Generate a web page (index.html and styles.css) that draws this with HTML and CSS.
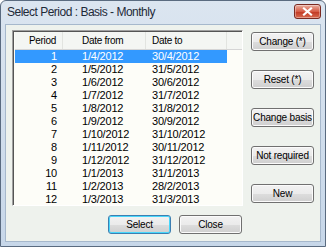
FILE: index.html
```html
<!DOCTYPE html>
<html lang="en">
<head>
    <meta charset="UTF-8">
    <title>Select Period</title>
    <link rel="stylesheet" href="styles.css">
</head>
<body>

    <div class="window">
        <div class="title-bar">
            <span class="title">Select Period : Basis - Monthly</span>
            <div class="close-btn">
                <svg width="13" height="9" viewBox="0 0 13 9">
                    <path d="M3 1.5 L10 7.5 M10 1.5 L3 7.5" stroke="#fff" stroke-width="2.2" stroke-linecap="square"/>
                </svg>
            </div>
        </div>

        <div class="client">
            <div class="top-row">
                <!-- period list -->
                <div class="list">
                    <div class="list-header">
                        <div class="col c1">Period</div>
                        <div class="col c2">Date from</div>
                        <div class="col c3">Date to</div>
                        <div class="col c4"></div>
                    </div>
                    <div class="list-body" id="rows"></div>
                </div>

                <div class="side-buttons">
                    <button class="btn">Change (*)</button>
                    <button class="btn">Reset (*)</button>
                    <button class="btn">Change basis</button>
                    <button class="btn">Not required</button>
                    <button class="btn">New</button>
                </div>
            </div>

            <div class="bottom-row">
                <button class="btn default">Select</button>
                <button class="btn">Close</button>
            </div>
        </div>
    </div>

    <script>
        var periods = [
            ["1", "1/4/2012", "30/4/2012"],
            ["2", "1/5/2012", "31/5/2012"],
            ["3", "1/6/2012", "30/6/2012"],
            ["4", "1/7/2012", "31/7/2012"],
            ["5", "1/8/2012", "31/8/2012"],
            ["6", "1/9/2012", "30/9/2012"],
            ["7", "1/10/2012", "31/10/2012"],
            ["8", "1/11/2012", "30/11/2012"],
            ["9", "1/12/2012", "31/12/2012"],
            ["10", "1/1/2013", "31/1/2013"],
            ["11", "1/2/2013", "28/2/2013"],
            ["12", "1/3/2013", "31/3/2013"]
        ];

        var body = document.getElementById("rows");
        for (var i = 0; i < periods.length; i++) {
            var row = document.createElement("div");
            row.className = i === 0 ? "row selected" : "row";
            row.innerHTML = '<div class="col c1">' + periods[i][0] + '</div>' +
                            '<div class="col c2">' + periods[i][1] + '</div>' +
                            '<div class="col c3">' + periods[i][2] + '</div>';
            body.appendChild(row);
        }
    </script>

</body>
</html>
```

FILE: styles.css
```css
* {
    margin: 0;
    padding: 0;
    box-sizing: border-box;
}

body {
    font-family: 'Liberation Sans', Arial, sans-serif;
    font-size: 11px;
    color: #000;
    background-color: #fff;
}

.window {
    width: 326px;
    height: 247px;
    display: flex;
    flex-direction: column;
    background: linear-gradient(#dbe5f0, #c7d7e9);
    border: 1px solid #5a6b80;
    border-radius: 6px 6px 0 0;
    padding: 0 4px 4px 4px;
}

.title-bar {
    height: 23px;
    display: flex;
    align-items: flex-start;
    justify-content: space-between;
    padding-left: 2px;
}

.title {
    font-size: 12px;
    letter-spacing: -0.5px;
    color: #1e2a38;
    margin-top: 4px;
}

.close-btn {
    width: 27px;
    height: 15px;
    margin-top: 3px;
    margin-right: 0;
    border: 1px solid #7a2a22;
    border-radius: 3px;
    background: linear-gradient(#eab0a2, #d65c46 50%, #c23b26 55%, #d86a4f);
    box-shadow: inset 0 0 0 1px rgba(255, 255, 255, 0.35);
    display: flex;
    align-items: center;
    justify-content: center;
}

.client {
    flex: 1;
    background-color: #eef2ed;
    border: 1px solid #a6b8cc;
    padding: 5px 6px;
}

.top-row {
    display: flex;
}

.list {
    width: 231px;
    height: 176px;
    background-color: #fdfdf8;
    border-top: 1px solid #a0a0a0;
    border-left: 1px solid #a0a0a0;
    border-right: 1px solid #fff;
    border-bottom: 1px solid #fff;
    box-shadow: inset 1px 1px 0 #555;
    padding: 1px 0 0 2px;
}

.list-header {
    display: flex;
    height: 18px;
    align-items: center;
    font-size: 10px;
    letter-spacing: -0.3px;
    background-color: #f4f6f3;
    border-bottom: 1px solid #d5d5d5;
}

.list-header .col {
    height: 100%;
    display: flex;
    align-items: center;
    border-right: 1px solid #e2e4e0;
}

.list-header .c1 {
    justify-content: flex-end;
}

.list-header .c4 {
    flex: 1;
    border-right: none;
}

.row {
    display: flex;
    width: 212px;
    height: 13px;
    line-height: 13px;
    letter-spacing: -0.2px;
}

.row.selected {
    background-color: #3399ff;
    color: #fff;
}

.col {
    white-space: nowrap;
}

.c1 {
    width: 48px;
    text-align: right;
    padding-right: 6px;
}

.c2 {
    width: 83px;
    padding-left: 19px;
}

.c3 {
    width: 81px;
    padding-left: 6px;
}

.side-buttons {
    display: flex;
    flex-direction: column;
    gap: 19px;
    margin-left: 8px;
    padding-top: 2px;
}

.btn {
    width: 63px;
    height: 19px;
    padding: 0;
    white-space: nowrap;
    font-family: 'Liberation Sans', Arial, sans-serif;
    font-size: 10px;
    letter-spacing: -0.2px;
    color: #000;
    border: 1px solid #707070;
    border-radius: 3px;
    background: linear-gradient(#f2f2f2 0%, #ebebeb 50%, #dddddd 51%, #cfcfcf 100%);
    box-shadow: inset 0 0 0 1px #fbfbfb;
}

.btn.default {
    border-color: #3c7fb1;
    box-shadow: inset 0 0 0 1px #48d7fb;
}

.bottom-row {
    display: flex;
    gap: 8px;
    margin-top: 9px;
    padding-left: 96px;
}
```
